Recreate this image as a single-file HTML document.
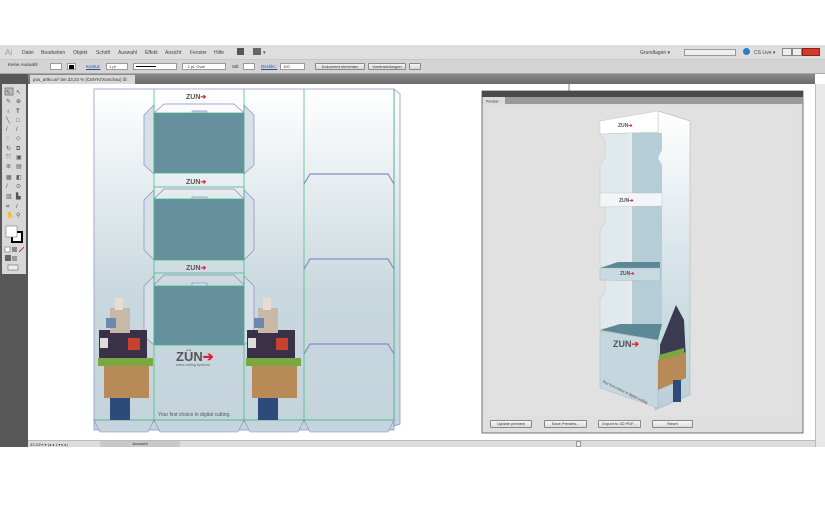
<!DOCTYPE html>
<html><head><meta charset="utf-8"><style>
*{margin:0;padding:0;box-sizing:border-box}
body{width:825px;height:525px;background:#fff;position:relative;overflow:hidden;font-family:"Liberation Sans",sans-serif;font-size:5px;color:#333}
.abs{position:absolute}
.menu{left:0;top:45px;width:825px;height:15px;background:#dedede;border-bottom:1px solid #c8c8c8}
.menu span{position:absolute;top:5px;font-size:5px;color:#444}
.ctrl{left:0;top:60px;width:825px;height:14px;background:#d4d4d4;border-bottom:1px solid #aaa}
.ctrl span{position:absolute;font-size:4.5px;color:#333}
.box{position:absolute;background:#fff;border:1px solid #999;height:7px;top:3px;font-size:4px;line-height:5px;padding-left:2px}
.btn{position:absolute;background:linear-gradient(#f4f4f4,#d8d8d8);border:1px solid #8a8a8a;height:7px;top:3px;font-size:4px;text-align:center;line-height:5px;border-radius:1px}
.tabs{left:28px;top:74px;width:787px;height:10px;background:linear-gradient(#8a8a8a,#6a6a6a)}
.tab{left:30px;top:75px;width:105px;height:9px;background:#d8d8d8;font-size:4.5px;padding:2px 3px}
.tools{left:0;top:74px;width:28px;height:373px;background:#575757}
.toolsl{left:2px;top:84px;width:24px;height:190px;background:#d8d8d8}
.status{left:28px;top:440px;width:787px;height:7px;background:#dcdcdc;border-top:1px solid #bbb}
.pbtn{position:absolute;top:420px;height:8px;background:linear-gradient(#f6f6f6,#dcdcdc);border:1px solid #888;font-size:4px;text-align:center;line-height:6px;border-radius:1px}
</style></head><body>
<div class="abs menu">
<span style="left:5px;top:3px;font-size:8px;color:#999">Ai</span>
<span style="left:22px">Datei</span><span style="left:41px">Bearbeiten</span><span style="left:73px">Objekt</span><span style="left:96px">Schrift</span><span style="left:118px">Auswahl</span><span style="left:145px">Effekt</span><span style="left:165px">Ansicht</span><span style="left:190px">Fenster</span><span style="left:214px">Hilfe</span>
<span style="left:237px;top:3px;width:7px;height:7px;background:#555"></span>
<span style="left:253px;top:3px;width:8px;height:7px;background:#666"></span><span style="left:263px">▾</span>
<span style="left:640px">Grundlagen ▾</span>
<div class="abs" style="left:684px;top:4px;width:52px;height:7px;background:#eee;border:1px solid #999"></div>
<span style="left:743px;top:3px;width:7px;height:7px;border-radius:50%;background:#2a7ec0"></span><span style="left:754px">CS Live ▾</span>
<div class="abs" style="left:782px;top:3px;width:10px;height:8px;background:#eee;border:1px solid #888"></div>
<div class="abs" style="left:792px;top:3px;width:10px;height:8px;background:#eee;border:1px solid #888"></div>
<div class="abs" style="left:802px;top:3px;width:18px;height:8px;background:#d43a2a;border:1px solid #822"></div>
</div>
<div class="abs ctrl">
<span style="left:8px;top:2px">Keine Auswahl</span>
<div class="box" style="left:50px;width:12px"></div>
<div class="box" style="left:67px;width:9px;padding:0"><div style="margin:1px;width:5px;height:4px;background:#000"></div></div>
<span style="left:86px;top:4px;color:#2a4fa0;text-decoration:underline">Kontur:</span>
<div class="box" style="left:106px;width:22px">1 pt</div>
<div class="box" style="left:133px;width:44px;padding:0"><div style="margin:2px;width:20px;height:1px;background:#000"></div></div>
<div class="box" style="left:182px;width:44px">· 2 pt. Oval</div>
<span style="left:232px;top:4px">Stil:</span>
<div class="box" style="left:243px;width:12px"></div>
<span style="left:261px;top:4px;color:#2a4fa0;text-decoration:underline">Deckkr.:</span>
<div class="box" style="left:280px;width:25px">100</div>
<div class="btn" style="left:315px;width:50px">Dokument einrichten</div>
<div class="btn" style="left:368px;width:38px">Voreinstellungen</div>
<div class="btn" style="left:409px;width:12px"></div>
</div>
<div class="abs tabs"></div>
<div class="abs tab">pos_artko.ai* bei 33,33 % (CMYK/Vorschau) ☒</div>
<div class="abs tools"></div>
<div class="abs toolsl"></div>
<div class="abs" style="left:0;top:74px;width:28px;height:10px;background:#575757"></div>
<svg class="abs" style="left:0;top:84px" width="28" height="200">
<g fill="#555" font-size="6" font-family="Liberation Sans">
<rect x="5" y="4" width="8" height="7" fill="#bbb" stroke="#555" stroke-width=".6"/>
<text x="6" y="10">↖</text><text x="16" y="10">↖</text>
<text x="6" y="19">✎</text><text x="16" y="19">⊕</text>
<text x="6" y="29">♁</text><text x="16" y="29" font-weight="bold">T</text>
<text x="6" y="38">╲</text><text x="16" y="38">□</text>
<text x="6" y="47">/</text><text x="16" y="47">/</text>
<text x="6" y="56">◌</text><text x="16" y="56">◇</text>
<text x="6" y="66">↻</text><text x="16" y="66">⧉</text>
<text x="6" y="75">⤧</text><text x="16" y="75">▣</text>
<text x="6" y="84">⊛</text><text x="16" y="84">▤</text>
<text x="6" y="95">▦</text><text x="16" y="95">◧</text>
<text x="6" y="104">/</text><text x="16" y="104">⊙</text>
<text x="6" y="114">▥</text><text x="16" y="114">▙</text>
<text x="6" y="124">⌗</text><text x="16" y="124">/</text>
<text x="6" y="133">✋</text><text x="16" y="133">⚲</text>
</g>
<rect x="12" y="148" width="10" height="10" fill="#fff" stroke="#000" stroke-width="2"/>
<rect x="6" y="142" width="11" height="11" fill="#fff" stroke="#777" stroke-width=".6"/>
<rect x="5" y="163" width="5" height="5" fill="#fff" stroke="#555" stroke-width=".5"/>
<rect x="12" y="163" width="5" height="5" fill="#888"/>
<line x1="19" y1="168" x2="24" y2="163" stroke="#d00" stroke-width=".8"/>
<rect x="5" y="171" width="6" height="6" fill="#666"/><rect x="12" y="172" width="5" height="5" fill="#999"/>
<rect x="8" y="181" width="10" height="5" fill="#eee" stroke="#555" stroke-width=".5"/>
</svg>
<svg class="abs" style="left:28px;top:84px" width="787" height="356">
<defs>
<linearGradient id="g" x1="0" y1="0" x2="0" y2="1"><stop offset="0" stop-color="#fff"/><stop offset=".6" stop-color="#c9d8df"/><stop offset="1" stop-color="#c4d4dc"/></linearGradient>
<linearGradient id="sd" x1="0" y1="0" x2="0" y2="1"><stop offset="0" stop-color="#fff"/><stop offset=".5" stop-color="#d8e4ea"/><stop offset="1" stop-color="#b9cfd8"/></linearGradient>
</defs>
<rect width="787" height="356" fill="#fff"/>
<line x1="541" y1="0" x2="541" y2="7" stroke="#333" stroke-width=".6"/>
<g transform="translate(-28,-84)">
<polygon points="394,89 400,94 400,424 394,426" fill="url(#g)" stroke="#8a8ac0" stroke-width=".7"/>
<rect x="94" y="89" width="300" height="341" fill="url(#g)" stroke="#8a8ac0" stroke-width=".7"/>
<g fill="#c6d5dd" stroke="#8a8ac0" stroke-width=".6">
<polygon points="94,420 154,420 148,432 100,432"/><polygon points="154,420 244,420 238,432 160,432"/><polygon points="244,420 304,420 298,432 250,432"/><polygon points="304,420 394,420 388,432 310,432"/>
</g>
<g fill="#d5e1e7" stroke="#8a8ac0" stroke-width=".7">
<polygon points="154,105 144,115 144,165 154,174"/><polygon points="244,105 254,115 254,165 244,174"/>
<polygon points="154,190 144,200 144,250 154,260"/><polygon points="244,190 254,200 254,250 244,260"/>
<polygon points="154,276 144,286 144,336 154,345"/><polygon points="244,276 254,286 254,336 244,345"/>
</g>
<g fill="none" stroke="#8a8ac0" stroke-width=".7">
<polyline points="154,113 164,104 234,104 244,113"/><polyline points="154,199 164,189 234,189 244,199"/><polyline points="154,285 164,275 234,275 244,285"/>
<polyline points="304,184 310,174 388,174 394,184" stroke-width="1.2"/>
<polyline points="304,269 310,259 388,259 394,269" stroke-width="1.2"/>
<polyline points="304,354 310,344 388,344 394,354" stroke-width="1.2"/>
<rect x="192" y="111" width="15" height="3" rx="1" fill="#dde"/><rect x="192" y="197" width="15" height="3" fill="#dde"/><rect x="192" y="283" width="15" height="3" fill="#dde"/>
</g>
<rect x="154" y="113" width="90" height="60" fill="#66909d"/>
<rect x="154" y="199" width="90" height="61" fill="#66909d"/>
<rect x="154" y="286" width="90" height="59" fill="#66909d"/>
<g stroke="#3cb878" stroke-width=".7">
<line x1="154" y1="89" x2="154" y2="422"/><line x1="244" y1="89" x2="244" y2="422"/><line x1="304" y1="89" x2="304" y2="422"/><line x1="394" y1="89" x2="394" y2="422"/>
<line x1="94" y1="420" x2="394" y2="420"/><line x1="154" y1="173" x2="244" y2="173"/><line x1="154" y1="187" x2="244" y2="187"/><line x1="154" y1="260" x2="244" y2="260"/><line x1="154" y1="273" x2="244" y2="273"/><line x1="154" y1="345" x2="244" y2="345"/><line x1="154" y1="113" x2="244" y2="113"/><line x1="154" y1="199" x2="244" y2="199"/><line x1="154" y1="286" x2="244" y2="286"/>
</g>
<g font-family="Liberation Sans" font-weight="bold">
<text x="186" y="99" font-size="7" fill="#555">ZUN<tspan fill="#e02030">➔</tspan></text>
<text x="186" y="184" font-size="7" fill="#555">ZUN<tspan fill="#e02030">➔</tspan></text>
<text x="186" y="270" font-size="7" fill="#555">ZUN<tspan fill="#e02030">➔</tspan></text>
<text x="176" y="361" font-size="13" fill="#555">ZÜN<tspan fill="#e02030">➔</tspan></text>
</g>
<text x="176" y="366" font-size="3.5" fill="#666" font-family="Liberation Sans">swiss cutting systems</text>
<text x="158" y="416" font-size="5" fill="#555" font-family="Liberation Sans">Your first choice in digital cutting.</text>
<g id="p">
<rect x="110" y="385" width="20" height="35" fill="#2d4a78"/>
<rect x="99" y="330" width="48" height="30" fill="#3a3048"/>
<rect x="110" y="308" width="20" height="25" fill="#c8b8a8"/>
<rect x="115" y="298" width="8" height="12" fill="#e8ddd0"/>
<rect x="106" y="318" width="10" height="10" fill="#6a88b0"/>
<rect x="98" y="358" width="55" height="8" fill="#7aa840"/>
<rect x="104" y="366" width="45" height="32" fill="#b88a58"/>
<rect x="100" y="338" width="8" height="10" fill="#ddd"/>
<rect x="128" y="338" width="12" height="12" fill="#c84030"/>
</g>
<use href="#p" x="148"/>
</g>
<g transform="translate(-28,-84)">
<rect x="482" y="91" width="321" height="342" fill="#dfdfdf" stroke="#555" stroke-width=".8"/>
<rect x="482" y="91" width="321" height="6" fill="#4a4a4a"/>
<rect x="482" y="97" width="321" height="7" fill="#9a9a9a"/>
<rect x="483" y="97" width="22" height="7" fill="#dcdcdc"/>
<text x="486" y="102.5" font-size="3.5" font-family="Liberation Sans" fill="#333">Preview</text>
<rect x="486" y="105" width="313" height="311" fill="#e1e1e1"/>
<polygon points="658,111 690,121 690,395 655,410 658,132" fill="url(#sd)" stroke="#aaa" stroke-width=".5"/>
<polygon points="600,121 658,111 658,132 600,134" fill="#fff" stroke="#bbb" stroke-width=".4"/>
<polygon points="600,134 658,132 658,330 600,331 600,300 605,292 605,270 600,264 600,230 605,222 605,200 600,193 600,165 605,157 605,140" fill="#dfe9ee" stroke="#bbb" stroke-width=".4"/>
<polygon points="631,133 662,133 662,150 658,158 662,165 662,330 631,330" fill="#b5cdd6"/>
<rect x="629" y="133" width="3" height="198" fill="#eaeaea"/>
<polygon points="600,193 662,193 662,206 600,207" fill="#f3f6f8" stroke="#bbb" stroke-width=".4"/>
<polygon points="600,268 618,262 660,262 660,268" fill="#5c8896"/>
<polygon points="600,268 660,268 660,281 600,280" fill="#c8dae1" stroke="#aab" stroke-width=".4"/>
<polygon points="600,330 620,324 662,324 658,340" fill="#5c8896"/>
<polygon points="600,331 658,340 658,408 600,388" fill="#c4d6de" stroke="#aab" stroke-width=".4"/>
<g font-family="Liberation Sans" font-weight="bold" fill="#555">
<text x="618" y="127" font-size="5">ZUN<tspan fill="#e02030">➔</tspan></text>
<text x="619" y="202" font-size="5">ZUN<tspan fill="#e02030">➔</tspan></text>
<text x="620" y="275" font-size="5">ZUN<tspan fill="#e02030">➔</tspan></text>
<text x="613" y="347" font-size="9">ZUN<tspan fill="#e02030">➔</tspan></text>
</g>
<text x="602" y="382" font-size="3.5" fill="#444" font-family="Liberation Sans" transform="rotate(26 602 382)">Your first choice in digital cutting</text>
<polygon points="670,320 676,305 684,320 686,360 680,370 660,372 660,345" fill="#3a3a50"/>
<polygon points="658,360 686,352 686,378 658,390" fill="#b88a58"/>
<polygon points="659,355 684,348 684,354 659,360" fill="#7aa840"/>
<rect x="673" y="380" width="8" height="22" fill="#2d4a78"/>
</g>
</svg>
<div class="pbtn" style="left:490px;width:42px">Update preview</div>
<div class="pbtn" style="left:544px;width:43px">Save Preview...</div>
<div class="pbtn" style="left:598px;width:43px">Export to 3D PDF...</div>
<div class="pbtn" style="left:652px;width:41px">Reset</div>
<div class="abs" style="left:815px;top:84px;width:10px;height:363px;background:#e8e8e8;border-left:1px solid #bbb"></div>
<div class="abs status"><span style="position:absolute;left:2px;top:1px;font-size:4px">33,33% ▾ |◂ ◂ 1 ▾ ▸ ▸|</span><div style="position:absolute;left:72px;top:0;width:80px;height:6px;background:#c8c8c8;font-size:4px;text-align:center">Auswahl</div><div style="position:absolute;left:548px;top:0;width:5px;height:6px;background:#eee;border:1px solid #999"></div></div>
</body></html>
